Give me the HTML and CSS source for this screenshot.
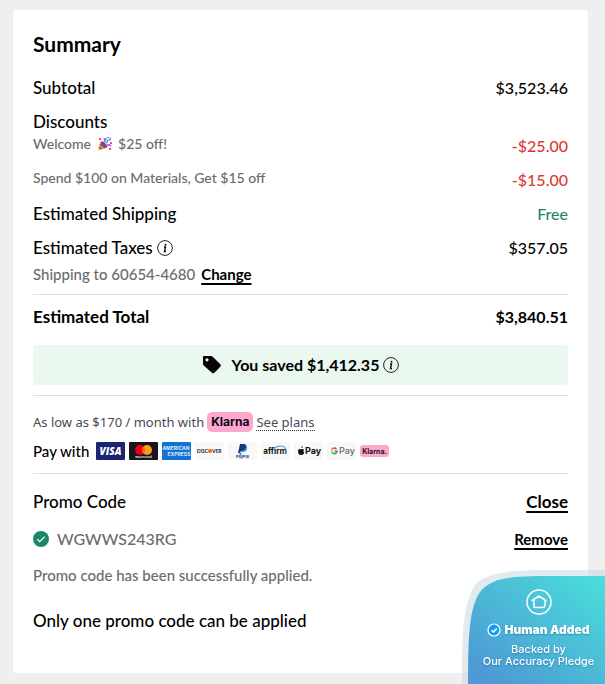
FILE: index.html
```html
<!DOCTYPE html>
<html lang="en">
<head>
  <meta charset="UTF-8">
  <meta name="viewport" content="width=device-width, initial-scale=1.0">
  <title>Order Summary</title>
  <link rel="stylesheet" href="styles.css">
</head>
<body>
  <main class="summary">
    <h1>Summary</h1>
    <div class="row">
      <span>Subtotal</span>
      <span class="amount">$3,523.46</span>
    </div>
    <h2>Discounts</h2>
    <div class="row">
      <span class="note offer">Welcome
        <svg class="party" viewBox="0 0 14 14" aria-hidden="true">
          <path d="M0 13.500 2.500 4.500l7 6z" fill="#f3a536"/>
          <path d="m1 10 3 2M2 7l5 4" stroke="#8b4a78" stroke-width="1.500"/>
          <ellipse cx="6" cy="7.500" rx="1.700" ry="4" transform="rotate(-45 6 7.500)" fill="#724d82"/>
          <path d="M6 5c2-1 1-2 0-4M9 9c1-2 3-1 4 0" fill="none" stroke="#d94bd0" stroke-width="1.600"/>
          <path d="M8 6c2 0 0-3 3-3s0-2 2-2M8 1v2" fill="none" stroke="#3fa9f5" stroke-width="1.600"/>
          <path d="M1 1h2v2H1zM9 0h2v1H9zM12 5h2v2h-2zM11 11h2v2h-2z" fill="#f0479a"/>
        </svg>
        $25 off!</span>
      <span class="amount discount">-$25.00</span>
    </div>
    <div class="row">
      <span class="note offer">Spend $100 on Materials, Get $15 off</span>
      <span class="amount discount">-$15.00</span>
    </div>
    <div class="row">
      <span>Estimated Shipping</span>
      <span class="amount free">Free</span>
    </div>
    <div class="row taxes">
      <span class="with-icon">Estimated Taxes
        <button class="info" type="button" aria-label="About estimated taxes">
          <svg viewBox="0 0 16 16"><circle cx="8" cy="8" r="7.400" fill="none" stroke="#222"/><circle cx="8.500" cy="4.700" r="1" fill="#111"/><path d="M7 7h1.500L7.500 11.500H9" fill="none" stroke="#111" stroke-width="1.400"/></svg>
        </button>
      </span>
      <span class="amount">$357.05</span>
    </div>
    <div class="ship-to">
      <span class="note">Shipping to 60654-4680</span>
      <a class="link small" href="#">Change</a>
    </div>

    <div class="row total">
      <span>Estimated Total</span>
      <span class="amount">$3,840.51</span>
    </div>
    <div class="saved">
      <svg class="tag" viewBox="0 0 20 20" aria-hidden="true"><path fill="#050505" fill-rule="evenodd" d="M1 1.500Q1 1 1.500 1H9q1 0 1.700.7l7.600 7.600q1.200 1.200 0 2.400l-6 6q-1.200 1.200-2.400 0L1.700 10.500Q1 9.800 1 9zM5 3.200a1.600 1.600 0 1 0 0 3.200 1.600 1.600 0 0 0 0-3.200z"/></svg>
      <span>You saved $1,412.35</span>
      <button class="info" type="button" aria-label="About your savings">
        <svg viewBox="0 0 16 16"><circle cx="8" cy="8" r="7.400" fill="none" stroke="#222"/><circle cx="8.500" cy="4.700" r="1" fill="#111"/><path d="M7 7h1.500L7.500 11.500H9" fill="none" stroke="#111" stroke-width="1.400"/></svg>
      </button>
    </div>

    <section class="payment">
      <div class="financing">
        <span>As low as $170 / month with</span>
        <span class="klarna">Klarna</span>
        <a href="#">See plans</a>
      </div>
      <div class="pay-with">
        <span>Pay with</span>
        <div class="cards">
          <svg viewBox="0 0 29 18" role="img" aria-label="Visa"><rect width="29" height="18" rx="1" fill="#1d2472"/><text x="14.500" y="13" class="visa">VISA</text></svg>
          <svg viewBox="0 0 29 18" role="img" aria-label="Mastercard"><rect width="29" height="18" rx="1" fill="#171717"/><circle cx="11" cy="8" r="5" fill="#eb001b"/><circle cx="18" cy="8" r="5" fill="#f79e1b"/><path d="M14.500 4.400a5 5 0 0 1 0 7.200 5 5 0 0 1 0-7.200z" fill="#ff5f00"/><text x="14.500" y="16" class="mc">mastercard</text></svg>
          <svg viewBox="0 0 29 18" role="img" aria-label="American Express"><rect width="29" height="18" rx="1" fill="#1472d0"/><text x="14" y="8" class="amex">AMERICAN</text><text x="17" y="14" class="amex">EXPRESS</text></svg>
          <svg viewBox="0 0 29 18" role="img" aria-label="Discover"><rect width="29" height="18" rx="1" fill="#f8f8f8"/><text x="13" y="11" class="disc left">DISC</text><circle cx="15" cy="9" r="2" fill="#f26a21"/><text x="17" y="11" class="disc">VER</text></svg>
          <svg viewBox="0 0 29 18" role="img" aria-label="PayPal"><rect width="29" height="18" rx="1" fill="#f8f8f8"/><path d="M12 2h4q3 0 2 4-1 3-4 3h-1l-1 2h-2z" fill="#173b80"/><path d="M18 4q2 1 1 3-1 3-4 3h-1l-1 3h-2l1-2h1l1-2q4 0 4-5z" fill="#2997d8"/><text x="14.500" y="16" class="paypal">PayPal</text></svg>
          <svg viewBox="0 0 29 18" role="img" aria-label="Affirm"><rect width="29" height="18" rx="1" fill="#f8f8f8"/><text x="14" y="12" class="affirm">affirm</text><path d="M13 7q2-3 6-3 6 0 6 5 0 2-1 3" fill="none" stroke="#469fd2" stroke-width="1.200"/></svg>
          <svg viewBox="0 0 29 18" role="img" aria-label="Apple Pay"><rect width="29" height="18" rx="1" fill="#f8f8f8"/><path d="M7 6q1-2 2-2 0 2-2 2zm-1 1 1 .3L8.500 7q1 0 1.500.7-1.500 1.600.3 3Q9 13 8 13l-1-.3-1 .3Q4 12 4 9q0-2 2-2z" fill="#111"/><text x="11" y="12" class="pay">Pay</text></svg>
          <svg viewBox="0 0 29 18" role="img" aria-label="Google Pay"><rect width="29" height="18" rx="1" fill="#f8f8f8"/><g fill="none" stroke-width="1.500"><path d="M9.500 7A3 3 0 0 0 5 7.200" stroke="#ea4335"/><path d="M5 7.200q-.800 1.600 0 3.300" stroke="#fbbc04"/><path d="M5 10.500q2 2 4.300.5" stroke="#34a853"/><path d="M7.500 9H10q0 1.300-.7 2" stroke="#4285f4"/></g><text x="12" y="12" class="pay gpay">Pay</text></svg>
          <svg viewBox="0 0 29 18" role="img" aria-label="Klarna"><rect y="3" width="29" height="12" rx="3" fill="#ffa8cd"/><text x="14.500" y="12" class="kl">Klarna.</text></svg>
        </div>
      </div>
    </section>

    <section class="promo">
      <div class="row">
        <span>Promo Code</span>
        <button class="link" type="button">Close</button>
      </div>
      <div class="row code">
        <span class="applied">
          <svg viewBox="0 0 16 16" aria-hidden="true"><circle cx="8" cy="8" r="8" fill="#1d8667"/><path d="m4.300 8.200 2.400 2.400 5-5" fill="none" stroke="#fff" stroke-width="1.200"/></svg>
          WGWWS243RG
        </span>
        <button class="link small" type="button">Remove</button>
      </div>
      <p class="note">Promo code has been successfully applied.</p>
      <p class="limit">Only one promo code can be applied</p>
    </section>
  </main>

  <aside class="pledge">
    <svg class="shape" viewBox="0 0 143 114" aria-hidden="true">
      <defs>
        <linearGradient id="pledge-fill" x1="0" y1="1" x2="1" y2="0">
          <stop offset="0.100" stop-color="#4897d3"/>
          <stop offset="1" stop-color="#45dfda"/>
        </linearGradient>
      </defs>
      <path d="M0 114C0 60 1 34 13 15 25 2 50 0 90 0h53v114z" fill="#c2d5df" fill-opacity="0.500"/>
      <path d="M6 114C6 68 7 38 18 22 30 7 50 6 90 6h53v108z" fill="url(#pledge-fill)"/>
    </svg>
    <svg class="home" viewBox="0 0 26 26" aria-hidden="true" fill="none" stroke="#fff" stroke-width="1.500" stroke-linejoin="round" stroke-linecap="round"><circle cx="13" cy="13" r="12"/><path d="M6 11.500 13 7l7 4.500M8 11v7.500h8.500q2.500 0 2.500-2.500v-4.500"/></svg>
    <strong>
      <svg viewBox="0 0 14 14" aria-hidden="true"><circle cx="7" cy="7" r="6" fill="#159df5" stroke="#fff" stroke-width="1.200"/><path d="m4.500 7.200 2 1.800 3.200-3.600" fill="none" stroke="#fff" stroke-width="1.500"/></svg>
      Human Added
    </strong>
    <span>Backed by</span>
    <span>Our Accuracy Pledge</span>
  </aside>
</body>
</html>
```
FILE: styles.css
```css
* {
  box-sizing: border-box;
}
body {
  margin: 0;
  padding: 10px 17px 11px 13px;
  background: #efefef;
  color: #000;
  font-family: Lato, "Liberation Sans", sans-serif;
  font-size: 17px;
  font-weight: 500;
  line-height: 24px;
}
.summary {
  padding: 20px 20px 40px;
  background: #fff;
  border-radius: 4px;
}
h1, h2, p {
  margin: 0;
}
h1 {
  margin-bottom: 18px;
  font-size: 21px;
  line-height: 28px;
  font-weight: 700;
}
h2 {
  font-size: 17px;
  font-weight: 500;
}
button {
  padding: 0;
  border: 0;
  background: none;
  color: inherit;
  font: inherit;
  cursor: pointer;
}
svg {
  display: block;
}
.row {
  display: flex;
  justify-content: space-between;
  margin-bottom: 10px;
}
.amount {
  font-size: 16px;
}
.note {
  color: #6b6b6b;
  font-size: 15px;
  line-height: 20px;
}
.offer {
  font-size: 14px;
}
.party {
  display: inline-block;
  width: 14px;
  height: 14px;
  margin: 0 3px;
  vertical-align: -2px;
}
.discount {
  color: #db3a34;
}
.free {
  color: #1f8466;
}
.taxes {
  margin-bottom: 4px;
}
.with-icon {
  display: flex;
  align-items: center;
  gap: 4px;
}
.info, .info svg {
  width: 16px;
  height: 16px;
}
.ship-to {
  display: flex;
  gap: 6px;
  line-height: 20px;
}
.link {
  color: #000;
  font-weight: 700;
  text-decoration: underline;
  text-decoration-thickness: 2px;
  text-underline-offset: 3px;
}
.small {
  font-size: 15px;
}
.total {
  margin: 10px 0 16px;
  padding-top: 10px;
  border-top: 1px solid #dedede;
  font-weight: 700;
}
.saved {
  display: flex;
  align-items: center;
  justify-content: center;
  height: 40px;
  background: #eaf8f0;
  border-radius: 4px;
  font-size: 16px;
  font-weight: 700;
}
.tag {
  width: 20px;
  height: 20px;
  margin-right: 10px;
}
.saved .info {
  margin-left: 4px;
}
.payment {
  margin-top: 10px;
  padding: 16px 0 10px;
  border-top: 1px solid #dedede;
}
.financing {
  display: flex;
  align-items: center;
  gap: 3px;
  color: #494a55;
  font-family: "Noto Sans", sans-serif;
  font-size: 13px;
  font-weight: 400;
  line-height: 20px;
}
.klarna {
  padding: 0 4px;
  border-radius: 5px;
  background: #ffa8cd;
  color: #0b051d;
  font-family: Inter, sans-serif;
  font-size: 12px;
  font-weight: 700;
}
.financing a {
  color: inherit;
  line-height: 16px;
  text-decoration: none;
  border-bottom: 1px dotted #333;
}
.pay-with {
  display: flex;
  align-items: center;
  gap: 7px;
  margin-top: 7px;
  font-size: 15px;
}
.cards {
  display: flex;
  gap: 4px;
}
.cards svg {
  width: 29px;
  height: 18px;
}
.cards text {
  font-family: Inter, sans-serif;
  font-weight: 700;
}
.visa, .mc, .amex, .paypal, .affirm, .kl {
  text-anchor: middle;
}
.cards .visa {
  fill: #fff;
  font-family: "Open Sans", sans-serif;
  font-size: 10px;
  font-style: italic;
  font-weight: 800;
}
.mc {
  fill: #ddd;
  font-size: 3px;
}
.amex {
  fill: #d9edff;
  font-size: 5px;
}
.cards .disc {
  fill: #222;
  font-family: Lato, sans-serif;
  font-size: 5px;
}
.left {
  text-anchor: end;
}
.paypal {
  fill: #244a8f;
  font-size: 4px;
}
.affirm {
  fill: #111;
  font-size: 8px;
}
.pay {
  fill: #111;
  font-size: 9px;
}
.cards .gpay {
  fill: #62666a;
  font-weight: 500;
}
.kl {
  fill: #24101c;
  font-size: 7px;
}
.promo {
  padding-top: 16px;
  border-top: 1px solid #dedede;
}
.row.code {
  align-items: center;
  margin: 13px 0 14px;
}
.applied {
  display: flex;
  align-items: center;
  gap: 8px;
  color: #6b6b6b;
  font-size: 16px;
}
.applied svg {
  width: 16px;
  height: 16px;
}
.limit {
  margin-top: 24px;
}
/* floating badge in the window corner */
.pledge {
  position: fixed;
  right: 0;
  bottom: 0;
  display: flex;
  flex-direction: column;
  align-items: center;
  width: 143px;
  height: 114px;
  padding: 19px 0 0 10px;
  color: #fff;
  font-family: Inter, sans-serif;
  font-size: 11px;
  font-weight: 500;
  line-height: 12px;
  text-align: center;
  text-shadow: 0 1px 2px rgba(0, 60, 110, 0.4);
}
.pledge .shape {
  position: absolute;
  inset: 0;
  z-index: -1;
  opacity: 0.97;
}
.home {
  width: 26px;
  height: 26px;
}
.pledge strong {
  display: flex;
  align-items: center;
  gap: 3px;
  margin: 8px 0 6px;
  font-size: 12px;
  font-weight: 900;
}
.pledge strong svg {
  width: 14px;
  height: 14px;
}
```
